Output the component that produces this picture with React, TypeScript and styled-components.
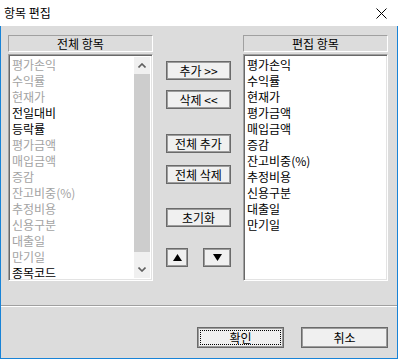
import React from 'react';
import styled, { createGlobalStyle } from 'styled-components';

const GlobalStyle = createGlobalStyle`
  html, body {
    margin: 0;
    padding: 0;
    background: #dcdcdc;
  }
  * {
    box-sizing: border-box;
  }
`;

const Window = styled.div`
  width: 398px;
  height: 359px;
  display: flex;
  flex-direction: column;
  font-family: "Noto Sans CJK KR", "Noto Sans", sans-serif;
  font-size: 12px;
  color: #000;
  overflow: hidden;
`;

const TitleBar = styled.div`
  height: 26px;
  background: #fff;
  display: flex;
  align-items: center;
  justify-content: space-between;
  padding: 0 11px 0 4px;
`;

const Title = styled.span`
  font-size: 12px;
  line-height: 14px;
`;

const Body = styled.div`
  flex: 1;
  display: flex;
  flex-direction: column;
  background: #dcdcdc;
  border: 1px solid #1883d7;
  border-top: none;
`;

const Main = styled.div`
  display: grid;
  grid-template-columns: 145px 1fr 145px;
  padding: 9px 9px 0 7px;
  height: 256px;
`;

const Panel = styled.div`
  display: flex;
  flex-direction: column;
  gap: 2px;
`;

const PanelHeader = styled.div`
  height: 17px;
  border: 1px solid;
  border-color: #a0a0a0 #fff #fff #a0a0a0;
  display: flex;
  align-items: center;
  justify-content: center;
  line-height: 14px;
`;

const ListBox = styled.div`
  height: 227px;
  background: #fff;
  border: 1px solid;
  border-color: #a0a0a0 #fff #fff #a0a0a0;
  box-shadow: inset 1px 1px 0 #696969, inset -1px -1px 0 #e3e3e3;
  padding: 2px 2px 2px 2px;
  display: flex;
  overflow: hidden;
`;

const Items = styled.div`
  flex: 1;
  display: flex;
  flex-direction: column;
  padding-left: 1px;
`;

const Item = styled.div<{ $disabled?: boolean }>`
  height: 16px;
  line-height: 16px;
  white-space: nowrap;
  color: ${p => (p.$disabled ? '#a3a3a3' : '#000')};
`;

const ScrollBar = styled.div`
  width: 16px;
  display: flex;
  flex-direction: column;
  background: #f0f0f0;
`;

const ScrollButton = styled.div`
  height: 17px;
  display: flex;
  align-items: center;
  justify-content: center;
  background: #f0f0f0;
`;

const ScrollThumb = styled.div`
  height: 178px;
  background: #cdcdcd;
`;

const ScrollTrack = styled.div`
  flex: 1;
`;

const Middle = styled.div`
  display: flex;
  flex-direction: column;
  align-items: center;
  padding-left: 1px;
`;

const Button = styled.button<{ $top?: number; $width?: number }>`
  width: ${p => p.$width ?? 65}px;
  height: 19px;
  margin-top: ${p => p.$top ?? 0}px;
  padding: 0;
  background: #f0f0f0;
  border: 1px solid #6a6a6a;
  box-shadow: inset 0 0 0 1px #9c9c9c;
  font-family: inherit;
  font-size: 12px;
  line-height: 14px;
  color: #000;
  display: flex;
  align-items: center;
  justify-content: center;
  gap: 4px;
`;

const ArrowRow = styled.div`
  width: 65px;
  margin-top: 21px;
  display: flex;
  justify-content: space-between;
`;

const Separator = styled.div`
  margin-top: 23px;
  height: 2px;
  border-top: 1px solid #a0a0a0;
  border-bottom: 1px solid #fff;
`;

const Footer = styled.div`
  display: flex;
  justify-content: flex-end;
  gap: 17px;
  padding: 20px 9px 0 0;
`;

const DialogButton = styled.button<{ $focused?: boolean }>`
  position: relative;
  width: 87px;
  height: 21px;
  padding: 0;
  background: #f0f0f0;
  border: 1px solid #6a6a6a;
  box-shadow: inset 0 0 0 1px #9c9c9c;
  font-family: inherit;
  font-size: 12px;
  line-height: 14px;
  color: #000;

  &::after {
    content: '';
    display: ${p => (p.$focused ? 'block' : 'none')};
    position: absolute;
    inset: 2px;
    border: 1px dotted #000;
  }
`;

const leftItems: [string, boolean][] = [
  ['평가손익', true],
  ['수익률', true],
  ['현재가', true],
  ['전일대비', false],
  ['등락률', false],
  ['평가금액', true],
  ['매입금액', true],
  ['증감', true],
  ['잔고비중(%)', true],
  ['추정비용', true],
  ['신용구분', true],
  ['대출일', true],
  ['만기일', true],
  ['종목코드', false],
];

const rightItems = [
  '평가손익',
  '수익률',
  '현재가',
  '평가금액',
  '매입금액',
  '증감',
  '잔고비중(%)',
  '추정비용',
  '신용구분',
  '대출일',
  '만기일',
];

const Chevron = ({ up }: { up?: boolean }) => (
  <svg width="8" height="5" viewBox="0 0 8 5">
    <path
      d={up ? 'M0.5 4.5 L4 1 L7.5 4.5' : 'M0.5 0.5 L4 4 L7.5 0.5'}
      fill="none"
      stroke="#606060"
      strokeWidth="1.6"
    />
  </svg>
);

const Triangle = ({ up }: { up?: boolean }) => (
  <svg width="9" height="7" viewBox="0 0 9 7">
    <polygon points={up ? '4.5,0 9,7 0,7' : '0,0 9,0 4.5,7'} fill="#000" />
  </svg>
);

const CloseIcon = () => (
  <svg width="11" height="11" viewBox="0 0 11 11">
    <path d="M0.5 0.5 L10.5 10.5 M10.5 0.5 L0.5 10.5" stroke="#000" strokeWidth="1" />
  </svg>
);

export default function App() {
  return (
    <>
      <GlobalStyle />
      <Window>
        <TitleBar>
          <Title>항목 편집</Title>
          <CloseIcon />
        </TitleBar>
        <Body>
          <Main>
            <Panel>
              <PanelHeader>전체 항목</PanelHeader>
              <ListBox>
                <Items>
                  {leftItems.map(([label, disabled]) => (
                    <Item key={label} $disabled={disabled}>
                      {label}
                    </Item>
                  ))}
                </Items>
                <ScrollBar>
                  <ScrollButton>
                    <Chevron up />
                  </ScrollButton>
                  <ScrollThumb />
                  <ScrollTrack />
                  <ScrollButton>
                    <Chevron />
                  </ScrollButton>
                </ScrollBar>
              </ListBox>
            </Panel>

            <Middle>
              <Button $top={26}>추가 &gt;&gt;</Button>
              <Button $top={10}>삭제 &lt;&lt;</Button>
              <Button $top={25}>전체 추가</Button>
              <Button $top={12}>전체 삭제</Button>
              <Button $top={24}>초기화</Button>
              <ArrowRow>
                <Button $width={22}>
                  <Triangle up />
                </Button>
                <Button $width={28}>
                  <Triangle />
                </Button>
              </ArrowRow>
            </Middle>

            <Panel>
              <PanelHeader>편집 항목</PanelHeader>
              <ListBox>
                <Items>
                  {rightItems.map(label => (
                    <Item key={label}>{label}</Item>
                  ))}
                </Items>
              </ListBox>
            </Panel>
          </Main>
          <Separator />
          <Footer>
            <DialogButton $focused>확인</DialogButton>
            <DialogButton>취소</DialogButton>
          </Footer>
        </Body>
      </Window>
    </>
  );
}
